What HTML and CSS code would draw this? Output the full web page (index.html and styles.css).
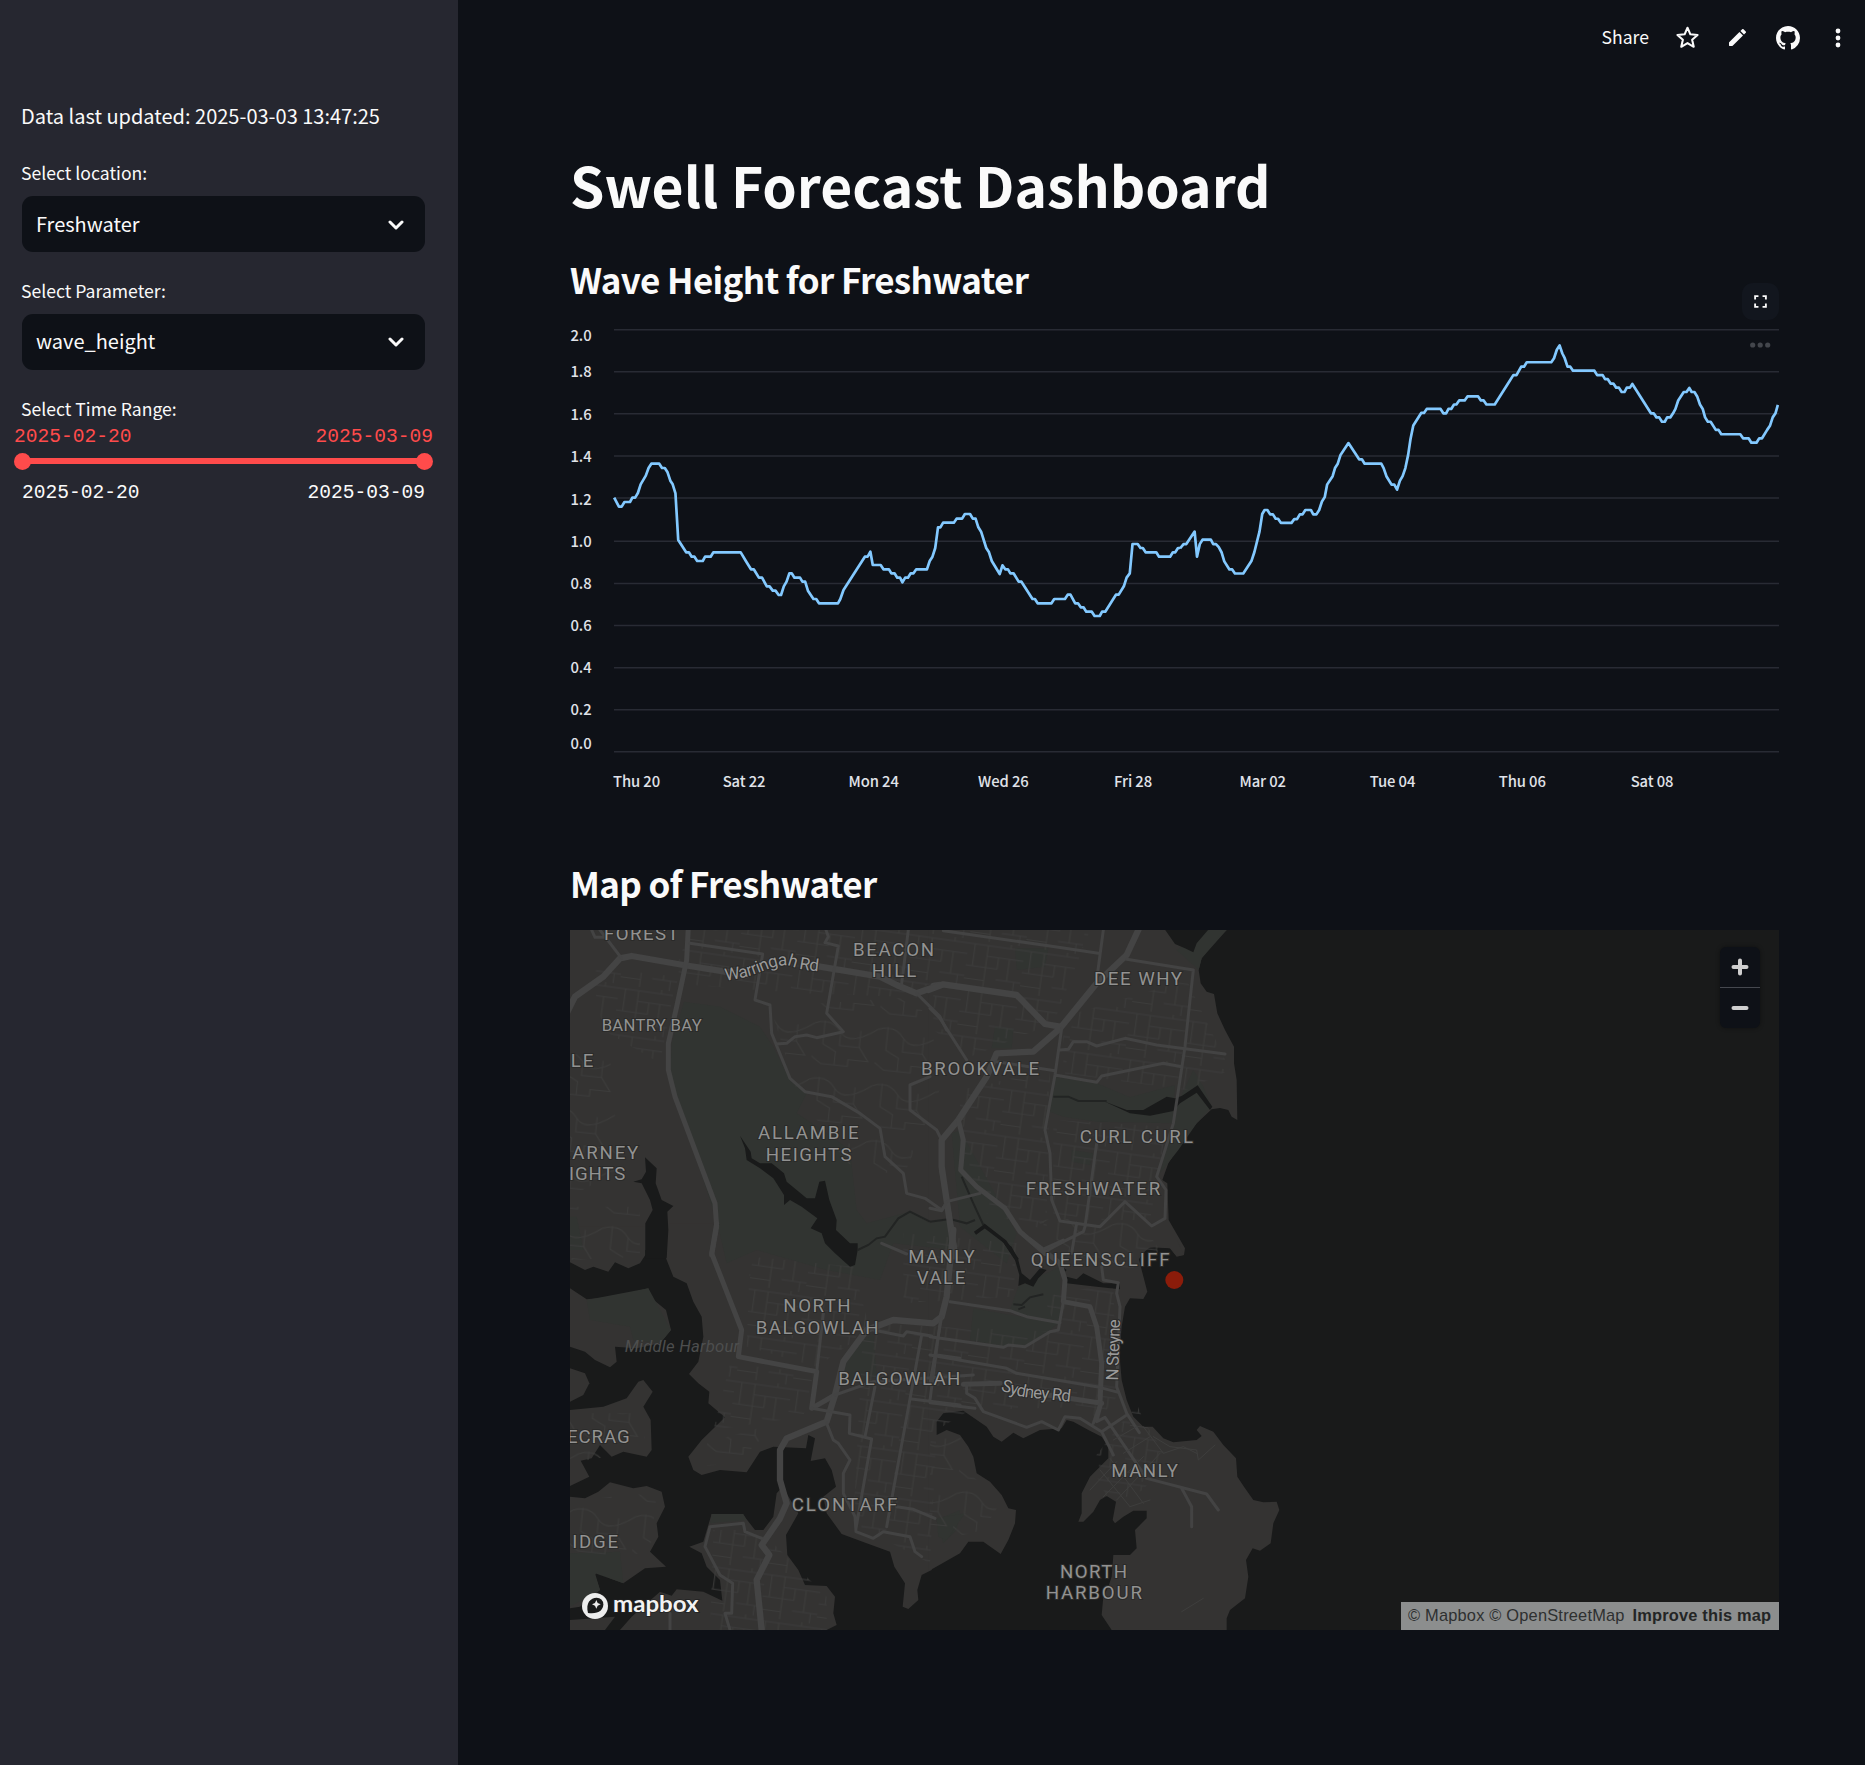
FILE: index.html
```html
<!DOCTYPE html>
<html lang="en">
<head>
<meta charset="utf-8">
<title>Swell Forecast Dashboard</title>
<link rel="stylesheet" href="styles.css">
</head>
<body>
<div class="app">
  <aside class="sidebar">
    <p class="updated">Data last updated: 2025-03-03 13:47:25</p>
    <div class="field">
      <label class="label">Select location:</label>
      <div class="select"><span>Freshwater</span>
        <svg class="chevron" viewBox="0 0 16 10"><path d="M2 2l6 6 6-6"/></svg></div>
    </div>
    <div class="field">
      <label class="label">Select Parameter:</label>
      <div class="select"><span>wave_height</span>
        <svg class="chevron" viewBox="0 0 16 10"><path d="M2 2l6 6 6-6"/></svg></div>
    </div>
    <div class="slider">
      <label class="label">Select Time Range:</label>
      <div class="thumb-values"><span>2025-02-20</span><span>2025-03-09</span></div>
      <div class="track"><i class="thumb"></i><i class="thumb"></i></div>
      <div class="bounds"><span>2025-02-20</span><span>2025-03-09</span></div>
    </div>
  </aside>

  <main class="main">
    <header class="toolbar">
      <span class="share">Share</span>
      <svg class="icon star" viewBox="0 0 24 24"><path d="M12 2.6l2.75 6.35 6.9.62-5.2 4.58 1.53 6.75L12 17.35 6.02 20.9l1.53-6.75-5.2-4.58 6.9-.62z" fill="none" stroke="#fafafa" stroke-width="2" stroke-linejoin="round"/></svg>
      <svg class="icon pencil" viewBox="3 3 18 18"><path fill="#fafafa" d="M3 17.46v3.04c0 .28.22.5.5.5h3.04c.13 0 .26-.05.35-.15L17.81 9.94l-3.75-3.75L3.15 17.1c-.1.1-.15.22-.15.36zM20.71 7.04a.996.996 0 0 0 0-1.41l-2.34-2.34a.996.996 0 0 0-1.41 0l-1.83 1.83 3.75 3.75 1.83-1.83z"/></svg>
      <svg class="icon github" viewBox="0 0 16 16"><path fill="#fafafa" d="M8 0C3.58 0 0 3.58 0 8c0 3.54 2.29 6.53 5.47 7.59.4.07.55-.17.55-.38 0-.19-.01-.82-.01-1.49-2.01.37-2.53-.49-2.69-.94-.09-.23-.48-.94-.82-1.13-.28-.15-.68-.52-.01-.53.63-.01 1.08.58 1.23.82.72 1.21 1.87.87 2.33.66.07-.52.28-.87.51-1.07-1.78-.2-3.64-.89-3.64-3.95 0-.87.31-1.59.82-2.15-.08-.2-.36-1.02.08-2.12 0 0 .67-.21 2.2.82.64-.18 1.32-.27 2-.27s1.36.09 2 .27c1.53-1.04 2.2-.82 2.2-.82.44 1.1.16 1.92.08 2.12.51.56.82 1.27.82 2.15 0 3.07-1.87 3.75-3.65 3.95.29.25.54.73.54 1.48 0 1.07-.01 1.93-.01 2.2 0 .21.15.46.55.38A8.01 8.01 0 0 0 16 8c0-4.42-3.58-8-8-8z"/></svg>
      <svg class="icon more" viewBox="0 0 6 20"><g fill="#fafafa"><circle cx="3" cy="3" r="2.4"/><circle cx="3" cy="10" r="2.4"/><circle cx="3" cy="17" r="2.4"/></g></svg>
    </header>

    <h1 class="title">Swell Forecast Dashboard</h1>

    <section class="chart-section">
      <h3 class="subtitle">Wave Height for Freshwater</h3>
      <div class="expand"><svg viewBox="0 0 14 14"><path d="M1.2 4.8V1.2h3.6M9.2 1.2h3.6v3.6M12.8 9.2v3.6H9.2M4.8 12.8H1.2V9.2"/></svg></div>
      <svg class="chart" viewBox="570 322 1209 478">
        <g class="grid">
          <path d="M614 329.7h1165M614 371.7h1165M614 413.8h1165M614 456h1165M614 498h1165M614 541.3h1165M614 583.5h1165M614 625.5h1165M614 667.7h1165M614 709.8h1165M614 751.8h1165"/>
        </g>
        <g class="axis">
          <text x="570.5" y="341">2.0</text><text x="570.5" y="377">1.8</text><text x="570.5" y="419.5">1.6</text><text x="570.5" y="462">1.4</text><text x="570.5" y="504.5">1.2</text><text x="570.5" y="546.5">1.0</text><text x="570.5" y="589">0.8</text><text x="570.5" y="631">0.6</text><text x="570.5" y="673">0.4</text><text x="570.5" y="715">0.2</text><text x="570.5" y="749">0.0</text>
          <text x="613" y="787">Thu 20</text>
          <g text-anchor="middle"><text x="744" y="787">Sat 22</text><text x="873.7" y="787">Mon 24</text><text x="1003.3" y="787">Wed 26</text><text x="1133" y="787">Fri 28</text><text x="1262.7" y="787">Mar 02</text><text x="1392.5" y="787">Tue 04</text><text x="1522.3" y="787">Thu 06</text><text x="1652" y="787">Sat 08</text></g>
        </g>
        <g class="series">
          <path transform="translate(560 310) scale(.3954 .33333)" d="M137 563L149 590H156L163 576H177L183 563H190L197 549L204 523L217 497L224 474L231 461H251L258 474H265L272 487L279 512L285 523L292 550L299 690L306 703L319 727H326L333 740H340L347 753H361L367 740H381L388 727H457L470 753L483 778H490L503 803H511L523 829H530L538 842H545L553 855H559L566 829L573 815L580 790H586L593 803H607L613 815H620L627 842L641 867H648L655 880H703L709 867L717 840L771 740H778L785 725L791 765H811L818 778H832L838 790H846L853 803H860L866 817L873 803H880L887 790H894L901 778H928L935 753L942 740L949 714L956 652H962L969 638H996L1003 626H1017L1024 612H1037L1044 626H1051L1058 652L1065 665L1078 714L1085 727L1092 753L1112 792L1119 766L1126 778H1133L1139 790H1147L1160 815H1167L1195 867H1201L1208 880H1243L1250 867H1277L1284 854H1291L1303 880H1310L1317 892H1324L1331 905H1345L1352 918H1365L1371 905H1379L1406 854H1413L1426 829L1433 803L1441 790L1448 702H1461L1468 714H1474L1481 727H1508L1515 740H1543L1550 727H1556L1563 714H1568"/>
          <path transform="translate(1180 270) scale(.3954 .338)" d="M0 824L9 811H16L37 774L43 848L50 811L57 798H78L84 811H91L98 820L105 835L112 862L125 886H132L139 898H160L181 860L188 835L201 774L208 722L214 710H221L228 723H235L242 736H248L255 748H282L289 737H296L303 723H310L317 710H331L337 723H345L352 710L359 685L366 672L372 635L386 610L392 586L399 573L406 547L426 512L453 560H460L467 573H509L515 586L522 610L535 635H542L549 650L556 624L563 610L570 586L577 547L583 500L590 460L610 423H617L624 411H659L666 424H673L679 411H686L693 398H699L706 386H720L727 374H754L761 386H768L775 398H796L830 335L843 311H851L863 286H870L877 273H939L946 261L953 236L960 223L967 247L973 261L980 286H987L994 298H1048L1055 311H1069L1075 323H1082L1089 336H1096L1103 348H1110L1117 361H1124L1130 348H1138L1144 337L1191 424H1198L1205 436H1212L1219 449H1226L1232 436H1240L1247 424L1253 411L1260 386L1274 361H1281L1288 349L1294 361H1301L1308 374L1315 398L1322 411L1328 436L1335 449H1342L1355 473H1362L1369 486H1417L1424 498H1438L1445 511H1458L1465 498H1472L1485 473L1492 461L1499 436L1506 424L1512 399"/>
        </g>
        <g fill="#43464c"><circle cx="1752.7" cy="345" r="2.6"/><circle cx="1760.2" cy="345" r="2.6"/><circle cx="1767.7" cy="345" r="2.6"/></g>
      </svg>
    </section>

    <h3 class="subtitle map-heading">Map of Freshwater</h3>

    <div class="map">
      <!-- One map unit is a third of a pixel; each tile group carries its own origin. -->
      <svg class="map-canvas" viewBox="0 0 3627 2100">
        <defs>
          <pattern id="streets" width="170" height="140" patternUnits="userSpaceOnUse" patternTransform="rotate(8)">
            <path class="street" d="M0 12H170M0 78H95M60 44H170M20 12V78M60 12V140M95 44V78M128 44V110M95 110H170M150 110V140M128 0V12M0 118H60"/>
          </pattern>
          <pattern id="lanes" width="190" height="170" patternUnits="userSpaceOnUse" patternTransform="rotate(6)">
            <path class="street" d="M0 30Q50 10 80 50T190 30M30 20V90L70 110V150M80 50V90H140V40M140 90L170 130H110V150H30M0 130L30 150"/>
          </pattern>
        </defs>

        <g class="land">
          <path d="M0 0H1170V960H0z"/>
          <g transform="translate(1080 -30)"><path d="M-5 30H890L850 70 815 115 806 150 812 190 830 215 852 222 862 280 885 330 912 380V430L920 480 922 600 905 590 895 570 870 564 845 568 800 610 760 660 715 730 697 780 712 790 716 900 745 950 765 985 762 1005 740 1010 720 985 680 980 650 985 625 1020H-5z"/></g>
          <g transform="translate(-30 900)">
            <path d="M30-10H256V75L240 100 205 115 165 97 145 125 100 110 75 120 30 97z"/>
            <path d="M30 175L80 208 160 200 265 175 275 205 318 240 333 300 300 340 230 355 165 350 170 395 150 412 105 390 75 365 30 350z"/>
            <path d="M30 415L75 430 88 460 70 495 30 515z"/>
            <path d="M30 540L130 530 200 505 235 455 250 450 278 485 250 530 272 570 275 660 260 680 190 665 155 680 120 645 95 685 62 692 88 740 30 768z"/>
            <path d="M30 800L75 805 115 785 150 757 220 775 260 768 305 785 315 830 290 880 295 920 270 965 318 1010 255 1015 190 1060 150 1045 115 1020 105 1035 120 1080 60 1130 30 1135z"/>
            <path d="M30 1170L165 1160 135 1200H30z"/>
            <path d="M180 1200L215 1160 300 1085 335 1097 350 1078 430 1085 487 1112 480 1050 440 1010 425 970 388 950 430 935 455 852 550 855 585 900 610 900 640 860 650 790 668 770 715 850 678 915 682 975 715 1020 735 1065 800 1068 825 1100 820 1150 830 1185 800 1200z"/>
            <path d="M320-20L318 85 340 140 380 160 400 215 425 260 430 320 415 395 387 432 415 460 448 485 445 520 495 562 425 630 385 680 400 720 425 735 480 720 560 727 600 665 640 650 738 655 745 615 765 625 752 693 795 685 815 720 828 770 790 800 800 850 845 912 920 940 990 965 1003 1010 1035 1060 1028 1130 1045 1137 1075 1110 1072 1080 1085 1035 1115 1020V-20z"/>
          </g>
          <g transform="translate(1080 930)"><path d="M-5 0H740L762 45 740 48 720 25 660 22 625 50 635 90 652 155 640 177 600 175 585 200 575 260 568 340 575 420 590 480 610 530 640 560 668 560 700 595 730 607 800 600 815 588 800 570 810 558 850 575 880 615 918 655 922 710 945 745 970 780 1000 787 1040 785 1048 810 1030 850 1022 910 990 932 968 925 948 960 955 1010 945 1075 900 1110 890 1135V1170H545L515 1125 520 1070 535 1040 545 1010 550 945 600 945 620 925 615 870 650 835V812H610L580 830 555 850 548 840 558 785 530 768 510 780 490 815 460 845H445L455 820V760L480 710 535 655V620L515 590 475 570 430 545 410 540 395 565 330 570 280 595 250 578 215 605 190 590 170 560 100 512 40 520 20 545V585L50 570 90 585 115 620 130 650 140 700 180 725 215 765 235 805 258 810 255 850 235 900 212 942 160 905H115L90 940-5 994z"/></g>
        </g>

        <g class="park">
          <g transform="translate(-30 -240)">
            <path d="M372 455L480 470 600 530 640 590 690 690 740 730 710 790 800 850 870 900 890 1080 920 1120 1050 1085 1110 1120 1165 1110 1180 1200 1000 1180 960 1290 800 1260 590 1200 500 1240 470 1110 330 690 335 580z"/>
            <path d="M1175 850L1200 840 1310 1040 1370 1150 1340 1240 1200 1130z"/>
            <path d="M50 1100L70 1200 30 1200V1100z"/>
          </g>
          <g transform="translate(1080 -30)">
            <path d="M370 470L500 490 600 532 735 495 728 610 500 605 400 590 360 575z"/><path d="M790 450L820 500 845 560 800 610 745 690 690 760 745 545z"/><path d="M255 85H355L345 140 260 150z"/><path d="M195 320L250 325 245 385 185 385z"/><path d="M425 690L490 700 480 735 425 725z"/><path d="M740 90L835 30H890L815 115 806 150z"/>
          </g>
          <g transform="translate(-30 900)">
            <path d="M80 210L265 175 333 300 300 340 220 330 210 290 90 270z"/><path d="M870 360L940 310 950 440 840 470z"/><path d="M455 852H550L560 870 450 880zM30 970L180 965 190 1060 105 1030 120 1080 30 1130z"/><path d="M1130 870L1200 840 1190 900 1150 940z"/>
          </g>
          <g transform="translate(1080 930)">
            <path d="M265 140L390 80V245L290 230 240 210zM130 205L385 250 360 270 285 318 215 318 120 300z"/><path d="M20 835L105 820 50 900 25 890z"/>
          </g>
        </g>

        <g class="suburb">
          <path fill="url(#streets)" d="M360 0H1170V120L1000 200 700 190 300 160zM60 110L320 140 270 400 100 300zM1090 0H1560L1450 280 1200 380 1090 300zM1480 260L1850 150 1980 420 1850 480 1480 430zM1170 480L1440 420 1430 900 1250 850 1170 650zM1450 570L1790 590 1740 870 1450 870zM540 980L850 1010 900 1200 740 1310 530 1250zM480 1300L730 1330 700 1460 430 1500zM880 1180L1560 1210 1570 1430 1200 1440 1100 1500 1080 1900 850 1780zM1420 1100L1630 1060 1640 1400 1580 1480zM1000 910L1340 940 1330 1100 1000 1120zM1560 1600L1700 1420 1720 1470 1790 1580 1720 1680 1620 1720zM430 1800L570 1800 770 2000V2100H420z"/>
          <path fill="url(#lanes)" d="M600 230L1040 200 1130 430 1000 740 830 700 680 480zM0 830H210V980L0 990zM0 1450L230 1450 220 1560 0 1600zM0 1710L260 1690 240 1870 0 1880zM1080 1500L1170 1520 1210 1640 1290 1720 1240 1800 1080 1840zM1400 870L1700 860 1770 960 1680 1020 1500 980zM400 1540L620 1480 500 1600 370 1610zM0 370L120 380 150 720 0 800z"/>
        </g>

        <g class="water">
          <g transform="translate(-30 -240)">
            <path d="M255 922L290 955 287 1000 305 1050 340 1068 322 1085 325 1140 320 1225H256V1120L278 1080 270 1050 245 1000 220 995 245 988 258 965z"/>
            <path d="M540 857L572 905 575 925 600 940 635 940 672 970 680 995 740 1045H765L778 995 795 992 808 1050 830 1110 828 1140 870 1180H893V1200L885 1245 870 1250 825 1210 795 1180 785 1150 752 1135 772 1105 725 1070 690 1050 672 1065V1035L640 985 600 955 560 930 555 895z"/>
          </g>
          <g transform="translate(1080 -30)">
            <path d="M705 29H835L800 70 790 97 765 85 735 72z"/>
            <path d="M520 543L590 570H640L710 530 735 535 755 528 803 496 847 560 840 570 800 518 750 550 730 573 660 587 600 580z"/>
            <path class="creek" d="M370 530L415 530 445 543H530M0 905L60 897 110 910 135 900M95 770L130 850 160 915"/>
            <path class="creek wide" d="M160 915L225 965 262 1020M135 940L165 918"/>
          </g>
          <path class="creek" transform="translate(-30 -240)" d="M893 1200L925 1185 950 1165 975 1160 1015 1105 1050 1085 1110 1115"/>
          <g transform="translate(1080 930)">
            <path d="M215 0L245 20 265 60 275 100 300 120 330 85 350 90 325 115 310 140 285 130 265 138 268 105 255 60 235 30zM410 110L440 118 460 100 520 130 570 130V148L500 140 410 130zM385 72L410 90 400 100z"/>
            <path class="creek" d="M250 193L275 195 300 172 340 163M265 208L285 200"/>
          </g>
        </g>

        <g class="roads">
          <g transform="translate(-30 -240)">
            <path class="w20" d="M20 490L45 440 130 380 180 325 215 318 370 345 560 375M740 343L960 380 1010 405 1070 430 1140 405 1120 408"/>
            <path class="w16" d="M385 230L380 330 350 470 325 580V660L345 740 465 1060 470 1130 455 1215M1145 870V960L1185 1200"/>
            <path class="w9" d="M95 240L105 262H140M120 240L185 325M390 280L608 312 585 450 630 465 635 550 690 685 735 725 815 740 900 790 960 835 975 920 1030 970 1040 1030 1095 1045 1145 1080 1160 1060M798 240L805 260 795 278 835 288 800 490 850 545 770 563 740 555 705 560 680 580 648 582M1045 240L1025 400M1070 430L1140 500 1160 540M1110 680L1050 705V780L1130 840 1145 870"/>
          </g>
          <g transform="translate(1080 -30)">
            <path class="w20" d="M-5 210L40 193 260 225 345 312 390 320M625 30L590 105 500 190 390 325 310 395 200 400 170 470 85 600 35 660V740L75 1010"/>
            <path class="w16" d="M85 600L100 660 92 750 140 800 225 865 270 935 345 1000"/>
            <path class="w9" d="M40 32L360 78 505 100M520 30L500 180M590 118L790 150 780 240 765 380 730 610 680 770 708 810 705 895 665 918 585 845 510 920 390 903 365 840 360 700 345 630 375 465 395 325M390 390L415 388 430 365H470L500 378 585 355 680 375 885 402M200 425L375 452M375 465L500 487 515 468 700 430 755 440M500 670L465 920 460 935 400 965 345 995M440 910L425 1000M0 265L30 295 110 420M0 865L35 872 50 845 150 820"/>
          </g>
          <g transform="translate(-30 900)">
            <path class="w16" d="M470-20L455 70 545 300 535 380 770 425 755 535 825 495"/>
            <path class="w20" d="M1180 0L1160 200 1145 260 1120 280 1000 270 920 300 850 395 825 495 800 575 680 625 660 660V750L680 820 660 865 605 945 628 975 590 1050 605 1200"/>
            <path class="w9" d="M755 535L870 555 868 610 935 627 888 895M790 250L770 425M945 470L915 620M825 495L940 455 1240 435M1085 315L980 890M940 300L1030 318 1040 305 1115 318M1140 280L1110 510M1130 375L1200 385M1055 507L1200 525M800 580L820 630 835 640 870 690 850 730V790L885 860 888 905 940 925 970 905 1050 920 1065 965 1085 980M1010 830L1060 838 1125 865M965 40L1040 72M330 1150V1200M605 925L555 905 550 880 450 890 435 950 480 1035 518 1060 515 1150H495L510 1200"/>
          </g>
          <g transform="translate(1080 930)">
            <path class="w16" d="M100 433L210 430M290 455L515 490M300 0L390 70 405 120 400 185 480 200 500 260 515 370 510 490"/>
            <path class="w9" d="M400 185L385 270 360 275 285 320 235 315 220 322 0 290M60 185L240 212 290 230 390 248M0 345L230 385 260 400 500 440 565 457M35 230L0 430M110 435V460L135 475 160 515 290 562 335 545 385 570 405 530 450 535 515 575 550 645M0 488L135 505M515 80L520 120 565 128 560 160 570 200 560 440 590 520 628 578M510 490L490 550M515 490L500 545 525 532 650 715 830 762 865 810M515 575L590 525M755 745L785 800V860M345 25L400 0"/>
            <path class="street" d="M540 655L640 790M510 690L600 800M480 750L560 665M520 770L640 650M560 780L690 640M600 800L660 780M640 560L700 640 760 620 800 640M550 600L620 560M580 640L660 590M755 1115L820 1075M670 590L720 620 800 630 805 660 855 615"/>
          </g>
        </g>

        <g class="places">
          <g transform="translate(-33 -240)">
            <text x="135" y="269" textLength="224">FOREST</text><text x="882" y="317" textLength="243">BEACON</text><text x="938" y="381" textLength="134">HILL</text>
            <text x="128" y="543" textLength="300" class="small">BANTRY BAY</text><text x="35" y="652" textLength="68">LE</text>
            <text x="597" y="867" textLength="302">ALLAMBIE</text><text x="620" y="932" textLength="258">HEIGHTS</text>
            <text x="4" y="926" textLength="234">LARNEY</text><text x="30" y="989" textLength="169">IGHTS</text>
            <path id="warringah" fill="none" stroke="none" d="M500 392Q560 385 615 362T700 350 800 366"/>
            <text class="road"><textPath href="#warringah" textLength="286">Warringah Rd</textPath></text>
          </g>
          <g transform="translate(1077 -30)">
            <text x="495" y="194" textLength="264">DEE WHY</text><text x="-24" y="465" textLength="354">BROOKVALE</text><text x="452" y="670" textLength="340">CURL CURL</text><text x="290" y="824" textLength="404">FRESHWATER</text><text x="305" y="1039" textLength="417">QUEENSCLIFF</text>
          </g>
          <g transform="translate(-33 900)">
            <text x="1048" y="98" textLength="199">MANLY</text><text x="1073" y="162" textLength="146">VALE</text><text x="673" y="247" textLength="202">NORTH</text><text x="590" y="311" textLength="369">BALGOWLAH</text><text x="838" y="464" textLength="366">BALGOWLAH</text><text x="24" y="638" textLength="188">ECRAG</text><text x="698" y="843" textLength="317">CLONTARF</text><text x="40" y="955" textLength="137">IDGE</text>
            <text x="197" y="367" textLength="343" class="harbour">Middle Harbour</text>
          </g>
          <g transform="translate(1077 930)">
            <text x="547" y="711" textLength="200">MANLY</text><text x="393" y="1014" textLength="201">NORTH</text><text x="350" y="1078" textLength="289">HARBOUR</text>
            <path id="sydney" fill="none" stroke="none" d="M214 450Q260 470 320 475T440 488"/>
            <text class="road"><textPath href="#sydney" textLength="214">Sydney Rd</textPath></text>
            <text class="road" transform="translate(567 422) rotate(-88)" textLength="184">N Steyne</text>
          </g>
        </g>

        <circle cx="1813" cy="1050" r="27" fill="#8b1c0a"/>

        <g class="logo" transform="translate(-30 900)">
          <circle cx="105" cy="1128" r="39"/>
          <path fill="#191a1a" d="M84 1149C76 1118 92 1103 110 1103A20 20 0 0 1 130 1123C130 1141 115 1153 84 1149z"/>
          <path d="M109 1110L113 1119 122 1123 113 1127 109 1136 105 1127 96 1123 105 1119z"/>
          <text x="159" y="1147" textLength="257" lengthAdjust="spacingAndGlyphs">mapbox</text>
        </g>
      </svg>
      <div class="zoom">
        <div class="zoom-btn"><svg viewBox="0 0 18 18"><path d="M2.5 9h13M9 2.5v13"/></svg></div>
        <div class="zoom-btn"><svg viewBox="0 0 18 18"><path d="M2.5 9h13"/></svg></div>
      </div>
      <div class="attribution"><span>© Mapbox</span> <span>© OpenStreetMap</span> <b>Improve this map</b></div>
    </div>
  </main>
</div>
</body>
</html>
```
FILE: styles.css
```css
* { box-sizing: border-box; }
body {
  margin: 0;
  background: #0e1117;
  color: #fafafa;
  font-family: "Noto Sans CJK SC", "Noto Sans", sans-serif;
  font-size: 20px;
}
h1, h3, p { margin: 0; }
svg { display: block; }
.app { display: flex; width: 1865px; height: 1765px; overflow: hidden; }

.sidebar { width: 458px; flex: none; background: #262730; padding: 98px 33px 0 22px; }
.updated { margin-left: -1px; line-height: 35px; white-space: nowrap; }
.field { height: 118px; }
.updated + .field { margin-top: 22px; }
.label { display: block; margin-left: -1px; font-size: 17.6px; line-height: 35px; height: 41px; }
.select {
  display: flex; align-items: center; justify-content: space-between;
  height: 56px; padding: 0 21px 2px 14px;
  background: #0e1117; border-radius: 11px;
}
.field + .field .select { padding-bottom: 4px; }
.chevron { width: 16px; height: 10px; margin-top: 4px; fill: none; stroke: #fafafa; stroke-width: 3; stroke-linecap: round; stroke-linejoin: round; }
.slider .label { height: 33px; }
.thumb-values, .bounds { display: flex; justify-content: space-between; font: 19.6px/26px "Liberation Mono", monospace; }
.thumb-values { margin: 0 -8px; color: #ff4b4b; }
.track { display: flex; justify-content: space-between; align-items: center; height: 6px; margin: 8px 0 16px; background: #ff4b4b; }
.thumb { width: 17px; height: 17px; margin: 0 -8px; border-radius: 50%; background: #ff4b4b; }

.main { flex: 1; padding: 0 86px 0 112px; display: flex; flex-direction: column; }
.toolbar { display: flex; align-items: center; justify-content: flex-end; height: 75px; margin-right: -62px; }
.share { font-size: 17.6px; margin: 0 26px 2px 0; }
.star { width: 25px; height: 25px; margin-right: 29px; }
.pencil { width: 17px; height: 17px; margin-right: 30px; }
.github { width: 24px; height: 24px; margin-right: 35px; }
.more { width: 6px; height: 20px; }
.title { margin-top: 75px; font-size: 55.2px; line-height: 68px; font-weight: 700; white-space: nowrap; }
.subtitle { font-size: 35px; line-height: 46px; font-weight: 600; letter-spacing: -.66px; white-space: nowrap; }
.chart-section { position: relative; margin-top: 38px; }
.expand {
  position: absolute; right: 0; top: 27px; width: 37px; height: 37px;
  display: grid; place-items: center; background: #12161e; border-radius: 11px;
}
.expand svg { width: 13px; height: 13px; margin: 0 1px 1px 0; fill: none; stroke: #fafafa; stroke-width: 2; }
.chart { width: 1209px; height: 478px; margin-top: 20px; }
.grid path { fill: none; stroke: #282b34; stroke-width: 1.4; }
.axis text { font-size: 14.8px; letter-spacing: -.1px; fill: #e0e3e9; font-weight: 500; }
.series path { fill: none; stroke: #83c9ff; stroke-width: 2.7; stroke-linejoin: round; vector-effect: non-scaling-stroke; }
.map-heading { margin-top: 60px; }

.map { position: relative; width: 1209px; height: 700px; margin-top: 24px; overflow: hidden; background: #191a1a; }
.map-canvas { width: 1209px; height: 700px; }
.land { fill: #343332; }
.park { fill: #313431; }
.water { fill: #191a1a; }
.creek { fill: none; stroke: #222423; stroke-width: 6; }
.creek.wide { stroke: #191a1a; stroke-width: 11; }
.street { fill: none; stroke: #3c3c3b; stroke-width: 3; }
.roads path { fill: none; stroke-linejoin: round; stroke-linecap: round; }
.w20 { stroke: #444; stroke-width: 19; }
.w16 { stroke: #444; stroke-width: 15; }
.w9 { stroke: #434343; stroke-width: 9; }
.roads .street { stroke: #3e3e3d; }
.places text { font: 400 56px Roboto, sans-serif; fill: #929291; stroke: #2a2a29; stroke-width: 6; paint-order: stroke; }
.places text.small { font-size: 50px; }
.places text.road { font-size: 51px; fill: #9a9a9a; }
.places text.harbour { font-size: 50px; font-style: italic; fill: #4d4e4e; stroke: none; }
.logo { fill: #ededed; }
.logo text { font: 700 68px Lato, sans-serif; fill: #f2f2f2; stroke: #222; stroke-width: 5; paint-order: stroke; }
.zoom { position: absolute; top: 17px; right: 19px; width: 40px; border-radius: 6px; background: #0e1117; box-shadow: 0 0 4px rgba(0,0,0,.4); }
.zoom-btn { display: grid; place-items: center; height: 40px; }
.zoom-btn + .zoom-btn { border-top: 1px solid #45484f; height: 41px; }
.zoom-btn svg { width: 18px; height: 18px; stroke: #cfcfcf; stroke-width: 4; stroke-linecap: round; }
.attribution {
  position: absolute; right: 0; bottom: 0; height: 28px; width: 378px; padding-left: 7px;
  background: #8c8e8e; color: #2e3030; font: 16.4px/27px "Liberation Sans", Arial, sans-serif; letter-spacing: .2px; white-space: nowrap;
}
.attribution b { margin-left: 3px; color: #232525; }
```
